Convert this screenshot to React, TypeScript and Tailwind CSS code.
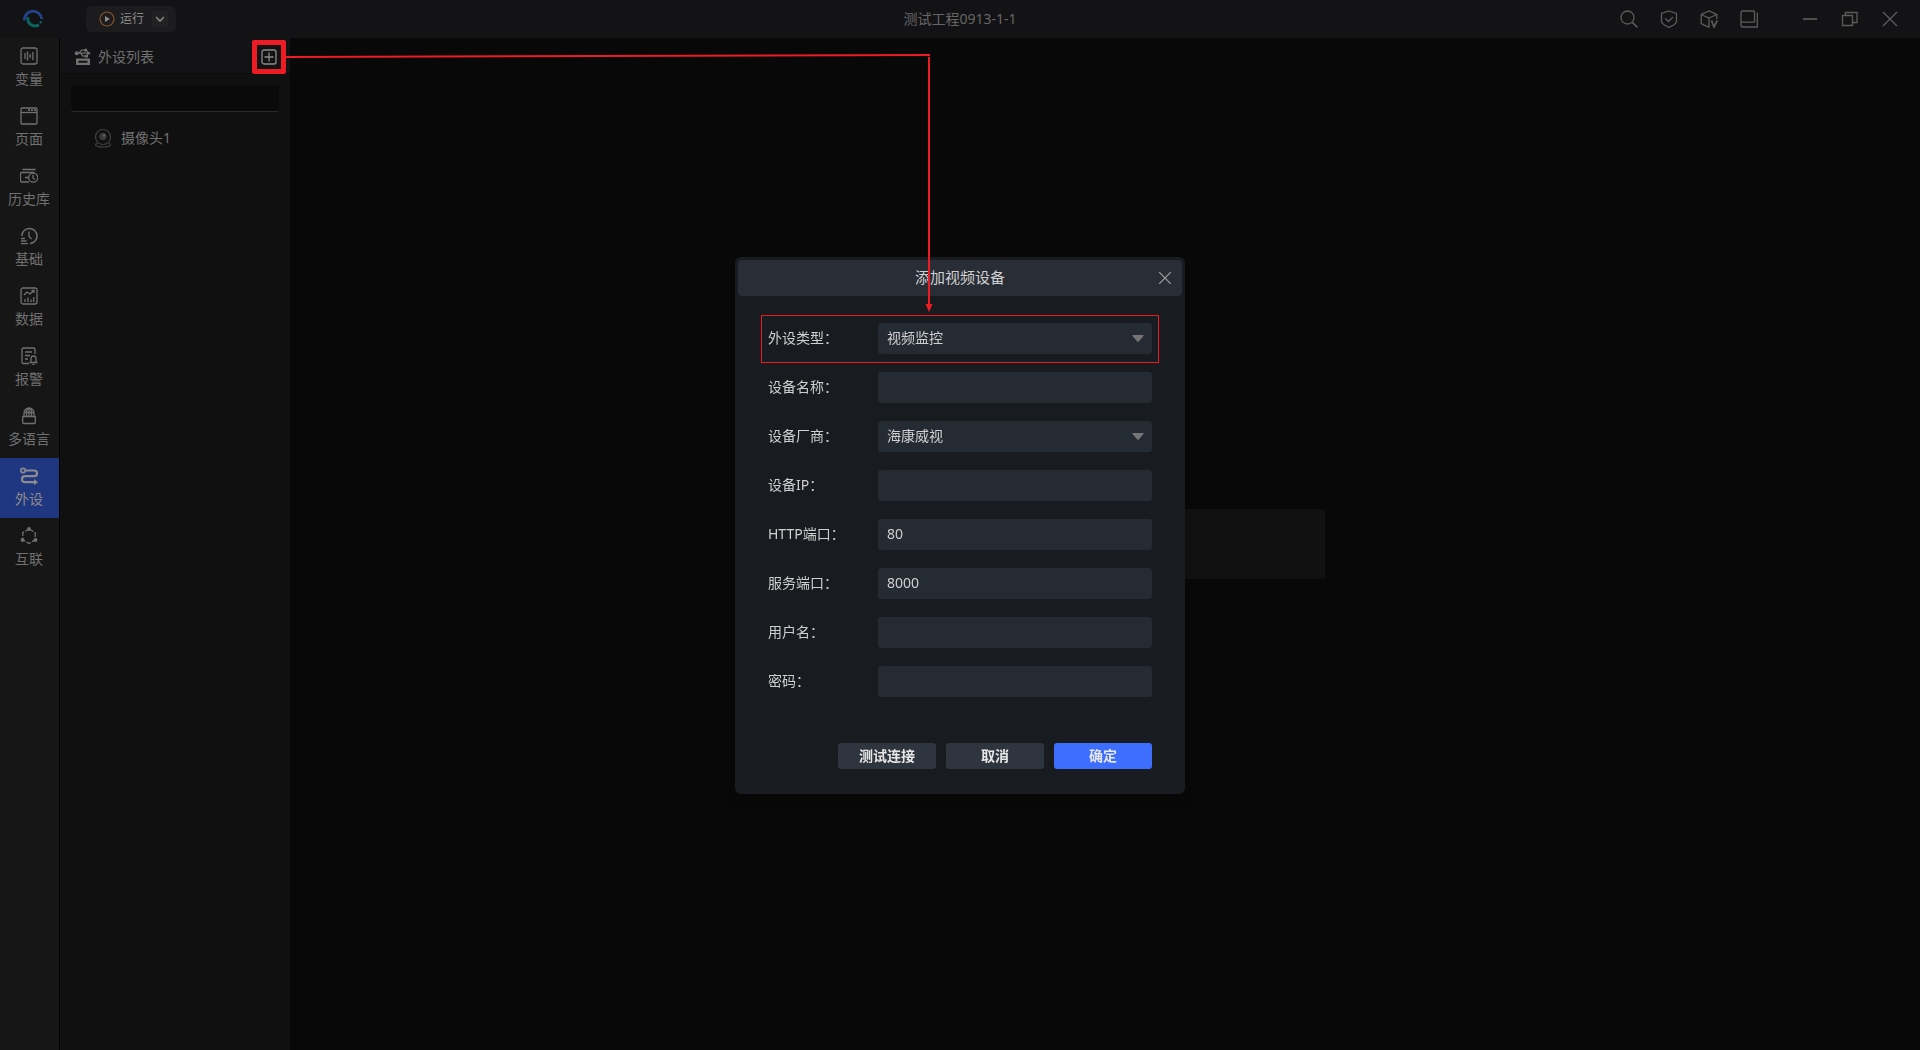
import type { ReactNode } from "react";
import { useState } from "react";

const Svg = ({ size = 18, children }: { size?: number; children: ReactNode }) => (
  <svg
    width={size}
    height={size}
    viewBox={`0 0 ${size} ${size}`}
    fill="none"
    stroke="currentColor"
    strokeWidth="1.3"
    aria-hidden="true"
  >
    {children}
  </svg>
);

const navItems = [
  {
    label: "变量",
    icon: (
      <Svg>
        <rect x="1" y="1" width="16" height="16" rx="2" />
        <path d="M5 6v6M7.500 4.500v9M10.200 7v4M12.900 5v8" />
      </Svg>
    ),
  },
  {
    label: "页面",
    icon: (
      <Svg>
        <rect x="1" y="1" width="16" height="16" rx="1" />
        <path d="M1 5.500h16" />
        <path d="M8 3.200h2M11 3.200h2M14 3.200h2" strokeWidth="1.800" />
      </Svg>
    ),
  },
  {
    label: "历史库",
    icon: (
      <Svg>
        <path d="M2.500 2.500h13M9 15H1.500a1 1 0 0 1-1-1V6.500a1 1 0 0 1 1-1h13M5 10.500h4" />
        <circle cx="13.200" cy="10.700" r="4.500" />
        <path d="M13 8v3l2 1.500" />
      </Svg>
    ),
  },
  {
    label: "基础",
    icon: (
      <Svg>
        <path d="M1.800 9A7.600 7.600 0 1 1 10 16.600" strokeWidth="1.500" />
        <path d="M9 4.500v5l2.500 2.500M1 11.500h4M1 14h5.500M1 16.700h7" />
      </Svg>
    ),
  },
  {
    label: "数据",
    icon: (
      <Svg>
        <rect x="1" y="1" width="16" height="16" rx="2" />
        <path d="M4 8l3-3 3 2 4-3.500M11.500 3.500H14V6M5 15v-3M8 15v-4.500M11 15v-2.500M13.700 15v-5" />
      </Svg>
    ),
  },
  {
    label: "报警",
    icon: (
      <Svg>
        <path d="M9 16.500H3.500a1.500 1.500 0 0 1-1.500-1.500V2.500A1.500 1.500 0 0 1 3.500 1h10A1.500 1.500 0 0 1 15 2.500V7M5 5h7M5 8.500h5M5 12h3" />
        <path d="M11 15.500v-4a2.500 2.500 0 0 1 5 0v4M9.500 15.500h8M12.500 17.300h2" />
      </Svg>
    ),
  },
  {
    label: "多语言",
    icon: (
      <Svg>
        <path d="M4 9.500V6a5 5 0 0 1 10 0v3.500M4 5.500h10M9 1v8M6.500 9.500V5c0-2 1-3.500 2.500-4 1.500.5 2.500 2 2.500 4v4.500" />
        <path d="M2.700 9.500h12.600v6a1 1 0 0 1-1 1H3.700a1 1 0 0 1-1-1z" />
      </Svg>
    ),
  },
  {
    label: "外设",
    icon: (
      <Svg>
        <circle cx="3" cy="3.500" r="2.200" strokeWidth="1.700" />
        <path d="M5.200 3.500h9a2.800 2.800 0 0 1 0 5.700H5a3 3 0 0 0 0 6h10" strokeWidth="2.200" />
        <path d="M14 12l4 3.200-4 3z" fill="currentColor" stroke="none" />
      </Svg>
    ),
  },
  {
    label: "互联",
    icon: (
      <Svg>
        <path d="M9 2l6.200 3.600v7.200L9 16.500l-6.200-3.700V5.600z" strokeDasharray="5 1.500" />
        <g fill="currentColor" stroke="none">
          <circle cx="9" cy="2" r="1.900" />
          <circle cx="2.500" cy="13" r="1.900" />
          <circle cx="15.500" cy="13" r="1.900" />
        </g>
      </Svg>
    ),
  },
];

const toolIcons = [
  {
    label: "搜索",
    icon: (
      <Svg>
        <circle cx="7.500" cy="7.500" r="6.500" />
        <path d="M12.300 12.300l5.200 5" strokeWidth="1.600" />
      </Svg>
    ),
  },
  {
    label: "校验",
    icon: (
      <Svg>
        <path d="M9 1l7.500 2.500v8.500Q15 15 9 17.300 3 15 1.500 12V3.500z" />
        <path d="M5.300 8.500L8.500 11.500l4.500-4.500" />
      </Svg>
    ),
  },
  {
    label: "版本",
    icon: (
      <Svg>
        <path d="M9 17.300L1.200 13.500V4.500L9 1l7.800 3.500V9M1.200 4.500L9 8l7.800-3.500M9 8v9.300" />
        <path d="M11.500 10.500l2.500 6.500 3.300-6.500" strokeWidth="1.700" />
      </Svg>
    ),
  },
  {
    label: "手册",
    icon: (
      <Svg>
        <path d="M14.500 12.200V2a1 1 0 0 0-1-1H2.500A1.500 1.500 0 0 0 1 2.500V15a2 2 0 0 0 2 2h14.300V2.500M1.200 12.200h13.300" />
      </Svg>
    ),
  },
];

const windowIcons = [
  { label: "最小化", icon: <Svg><path d="M2 9h14" strokeWidth="1.700" /></Svg> },
  {
    label: "还原",
    icon: (
      <Svg>
        <path d="M1.500 5.500h10v10h-10zM4.500 5.500v-3h11.500v10h-4.500" />
      </Svg>
    ),
  },
  { label: "关闭", icon: <Svg><path d="M2 2l14 14M16 2L2 16" /></Svg> },
];

const fields = [
  { id: "kind", label: "外设类型：", options: ["视频监控"], marked: true },
  { id: "name", label: "设备名称：" },
  { id: "vendor", label: "设备厂商：", options: ["海康威视"] },
  { id: "ip", label: "设备IP：" },
  { id: "http", label: "HTTP端口：", value: "80" },
  { id: "service", label: "服务端口：", value: "8000" },
  { id: "user", label: "用户名：" },
  { id: "password", label: "密码：", type: "password" },
];

const fieldClass =
  "block h-[31px] w-full appearance-none rounded-[3px] bg-[#252b33] px-[9px] pb-[2px] text-[14px] text-[#cfcfcf] outline-none";

function TitleBar() {
  return (
    <header className="grid h-[38px] shrink-0 grid-cols-[1fr_auto_1fr] items-center bg-[#131315] text-[#666]">
      <div className="flex items-center gap-[42px] pl-[22px]">
        <svg width="22" height="20" viewBox="0 0 22 20" fill="none" aria-hidden="true">
          <path d="M2.200 11.500C2.500 5.500 6.500 2.200 11 2.200s8.500 3.500 8.700 7.800" stroke="#24438c" strokeWidth="2.800" />
          <path d="M6 8c-1.200 6.500 4.500 10.800 11 8" stroke="#0c625c" strokeWidth="3" />
          <circle cx="18.700" cy="13.200" r="1.200" fill="#0c625c" />
        </svg>
        <div className="flex h-[26px] items-center rounded-md bg-[#1c1c1e] pr-2 pl-[13px]">
          <button className="flex items-center gap-[5px] text-[12px] text-[#8c8c8c]">
            <svg width="16" height="16" viewBox="0 0 16 16" aria-hidden="true">
              <circle cx="8" cy="8" r="7" fill="none" stroke="#85552a" strokeWidth="1.200" />
              <path d="M6 5l5 3-5 3z" fill="#8c8c8c" />
            </svg>
            运行
          </button>
          <button aria-label="更多" className="ml-2 flex size-4 items-center justify-center rounded-xs bg-[#212123]">
            <svg width="8" height="6" viewBox="0 0 8 6" fill="none" aria-hidden="true">
              <path d="M0 1l4 4 4-4" stroke="#8c8c8c" strokeWidth="1.500" />
            </svg>
          </button>
        </div>
      </div>
      <h1 className="pb-[2px] text-[14px]">测试工程0913-1-1</h1>
      <div className="flex items-center justify-end pr-[21px] text-[#5c5c5c]">
        <div className="mr-[43px] flex gap-[22px]">
          {toolIcons.map((t) => (
            <button key={t.label} aria-label={t.label}>{t.icon}</button>
          ))}
        </div>
        <div className="flex gap-[22px]">
          {windowIcons.map((t) => (
            <button key={t.label} aria-label={t.label}>{t.icon}</button>
          ))}
        </div>
      </div>
    </header>
  );
}

function SideNav({ active, onSelect }: { active: string; onSelect: (label: string) => void }) {
  return (
    <nav className="w-[60px] shrink-0 border-r border-black bg-[#161616]">
      {navItems.map((item) => (
        <button
          key={item.label}
          onClick={() => onSelect(item.label)}
          className={`flex h-[60px] w-full flex-col items-center gap-1 pt-[9px] pr-px text-[14px] leading-5 ${
            item.label === active ? "bg-[#1f3680] text-[#8c8c8c]" : "text-[#707070]"
          }`}
        >
          {item.icon}
          {item.label}
        </button>
      ))}
    </nav>
  );
}

function DeviceList() {
  return (
    <aside className="w-[230px] shrink-0 bg-[#101010] text-[14px] text-[#707070]">
      <div className="flex h-9 items-center border-b border-[#0c0c0c] bg-[#131315] pt-[2px] pr-[12px] pl-[14px]">
        <svg width="18" height="18" viewBox="0 0 18 18" fill="currentColor" aria-hidden="true">
          <path d="M2 10.500h14v6.500H2zM4.500 12.700v2h9v-2z" fillRule="evenodd" />
          <path d="M2 5.200h12M5 5.200l2.500-3H11M6.500 5.200l2.500 3h3" fill="none" stroke="currentColor" strokeWidth="1.300" />
          <circle cx="2.800" cy="5.200" r="2" />
          <circle cx="11.700" cy="2.200" r="1.600" />
          <path d="M13 2.800l4 2.400-4 2.400zM11 7h3v2.500h-3z" />
        </svg>
        <h2 className="ml-[6px] grow">外设列表</h2>
        <div className="relative">
          <button aria-label="添加外设" className="block text-[#8c8c8c]">
            <Svg>
              <rect x="2" y="2" width="14" height="14" rx="2" />
              <path d="M9 4.500v9M4.500 9h9" />
            </Svg>
          </button>
          <div className="pointer-events-none absolute -inset-2 rounded-xs border-[5px] border-[#ed1c24]" />
        </div>
      </div>
      <div className="pt-[11px] pr-[11px] pl-[11px]">
        <input
          aria-label="搜索外设"
          className="block h-[27px] w-full rounded-[3px] border-b border-[#2b2b2b] bg-[#0a0a0a] px-2 outline-none"
        />
      </div>
      <ul className="pt-[15px]">
        <li className="flex items-center gap-[9px] pl-[34px]">
          <svg width="18" height="20" viewBox="0 0 18 20" fill="none" stroke="#424242" strokeWidth="1.200" aria-hidden="true">
            <circle cx="9" cy="9" r="7.500" />
            <circle cx="9" cy="8.500" r="3.700" fill="#3a3a3a" stroke="none" />
            <circle cx="10" cy="7.500" r="1" fill="#777" stroke="none" />
            <path d="M3 15c-3 2-1 4 6 4s9-2 6-4" />
          </svg>
          摄像头1
        </li>
      </ul>
    </aside>
  );
}

function AddDeviceDialog() {
  return (
    <div className="fixed inset-0 flex items-center justify-center">
      <div
        role="dialog"
        aria-labelledby="dialog-title"
        className="w-[450px] rounded-md bg-[#181b1f] p-[3px] text-[14px] text-[#cfcfcf] shadow-lg"
      >
        <div className="grid h-9 grid-cols-[1fr_auto_1fr] items-center rounded bg-[#292d36] pr-[11px]">
          <h2 id="dialog-title" className="col-start-2 pl-[11px] text-[15px]">添加视频设备</h2>
          <button aria-label="关闭" className="justify-self-end text-[#a0a0a0]">
            <svg width="12" height="12" viewBox="0 0 12 12" stroke="currentColor" strokeWidth="1.200" aria-hidden="true">
              <path d="M0 0l12 12M12 0L0 12" />
            </svg>
          </button>
        </div>
        <form className="px-[30px] pt-[27px] pb-[22px]" onSubmit={(e) => e.preventDefault()}>
          <div className="flex flex-col gap-[18px]">
            {fields.map((f) => (
              <div key={f.id} className="relative flex items-center">
                <label htmlFor={f.id} className="w-[110px] shrink-0 pb-[2px]">{f.label}</label>
                <div className="relative grow">
                  {f.options ? (
                    <>
                      <select id={f.id} className={fieldClass}>
                        {f.options.map((o) => (
                          <option key={o}>{o}</option>
                        ))}
                      </select>
                      <svg
                        width="12"
                        height="7"
                        viewBox="0 0 12 7"
                        className="pointer-events-none absolute top-3 right-2"
                        aria-hidden="true"
                      >
                        <path d="M1 0h10q1 0 .5 1L7 6.300q-1 1-2 0L.5 1Q0 0 1 0z" fill="#757575" />
                      </svg>
                    </>
                  ) : (
                    <input id={f.id} type={f.type ?? "text"} defaultValue={f.value} className={fieldClass} />
                  )}
                </div>
                {f.marked && (
                  <div className="pointer-events-none absolute -inset-x-[7px] -top-2 -bottom-[9px] border border-[#ed1c24]" />
                )}
              </div>
            ))}
          </div>
          <div className="mt-[46px] flex justify-end gap-[10px] font-bold text-[#e6e6e6]">
            <button type="button" className="h-[26px] w-[98px] rounded-[3px] bg-[#2f353f]">测试连接</button>
            <button type="button" className="h-[26px] w-[98px] rounded-[3px] bg-[#2f353f]">取消</button>
            <button type="submit" className="h-[26px] w-[98px] rounded-[3px] bg-[#3d6eff]">确定</button>
          </div>
        </form>
      </div>
    </div>
  );
}

// leads from the add button to the device type row
function GuideArrow() {
  return (
    <svg
      className="pointer-events-none absolute top-0 left-0"
      width="940"
      height="320"
      viewBox="0 0 940 320"
      fill="none"
      stroke="#ed1c24"
      strokeWidth="2"
      aria-hidden="true"
    >
      <path d="M286 57L930 55M929 57V306" />
      <path d="M925.500 304h7L929 312z" fill="#ed1c24" stroke="none" />
    </svg>
  );
}

export default function App() {
  const [active, setActive] = useState("外设");

  return (
    <div className="relative flex min-h-screen flex-col bg-[#080808] font-['Noto_Sans','Noto_Sans_CJK_SC',sans-serif]">
      <TitleBar />
      <div className="flex grow">
        <SideNav active={active} onSelect={setActive} />
        <DeviceList />
        <main className="flex grow items-center justify-center">
          <div className="h-[70px] w-[440px] rounded-t bg-[#111]" />
        </main>
      </div>
      <AddDeviceDialog />
      <GuideArrow />
    </div>
  );
}
